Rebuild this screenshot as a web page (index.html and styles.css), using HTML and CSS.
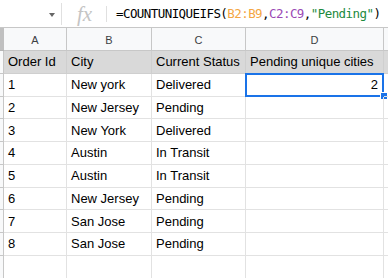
FILE: index.html
```html
<!DOCTYPE html>
<html>
<head>
<meta charset="utf-8">
<link rel="stylesheet" href="styles.css">
</head>
<body>
<div class="formula-bar">
  <div class="namebox"><span class="caret"></span></div>
  <div class="sep sep-tall"></div>
  <div class="fx">fx</div>
  <div class="sep sep-short"></div>
  <div class="formula">=COUNTUNIQUEIFS(<span class="r1">B2:B9</span>,<span class="r2">C2:C9</span>,<span class="str">"Pending"</span>)</div>
</div>
<div class="sheet">
  <div class="corner"></div>
  <div class="colhead">A</div>
  <div class="colhead">B</div>
  <div class="colhead">C</div>
  <div class="colhead">D</div>
  <div class="colhead"></div>

  <div class="rowhead"></div>
  <div class="cell hdr">Order Id</div>
  <div class="cell hdr">City</div>
  <div class="cell hdr">Current Status</div>
  <div class="cell hdr">Pending unique cities</div>
  <div class="cell hdr"></div>

  <div class="rowhead"></div>
  <div class="cell">1</div>
  <div class="cell">New york</div>
  <div class="cell">Delivered</div>
  <div class="cell num selected">2<span class="sel-box"></span><span class="sel-handle"></span></div>
  <div class="cell"></div>

  <div class="rowhead"></div>
  <div class="cell">2</div>
  <div class="cell">New Jersey</div>
  <div class="cell">Pending</div>
  <div class="cell"></div>
  <div class="cell"></div>

  <div class="rowhead"></div>
  <div class="cell">3</div>
  <div class="cell">New York</div>
  <div class="cell">Delivered</div>
  <div class="cell"></div>
  <div class="cell"></div>

  <div class="rowhead"></div>
  <div class="cell">4</div>
  <div class="cell">Austin</div>
  <div class="cell">In Transit</div>
  <div class="cell"></div>
  <div class="cell"></div>

  <div class="rowhead"></div>
  <div class="cell">5</div>
  <div class="cell">Austin</div>
  <div class="cell">In Transit</div>
  <div class="cell"></div>
  <div class="cell"></div>

  <div class="rowhead"></div>
  <div class="cell">6</div>
  <div class="cell">New Jersey</div>
  <div class="cell">Pending</div>
  <div class="cell"></div>
  <div class="cell"></div>

  <div class="rowhead"></div>
  <div class="cell">7</div>
  <div class="cell">San Jose</div>
  <div class="cell">Pending</div>
  <div class="cell"></div>
  <div class="cell"></div>

  <div class="rowhead"></div>
  <div class="cell">8</div>
  <div class="cell">San Jose</div>
  <div class="cell">Pending</div>
  <div class="cell"></div>
  <div class="cell"></div>

  <div class="rowhead"></div>
  <div class="cell"></div>
  <div class="cell"></div>
  <div class="cell"></div>
  <div class="cell"></div>
  <div class="cell"></div>

  <div class="rowhead"></div>
  <div class="cell"></div>
  <div class="cell"></div>
  <div class="cell"></div>
  <div class="cell"></div>
  <div class="cell"></div>
</div>
</body>
</html>
```
FILE: styles.css
```css
* { box-sizing: border-box; }
html, body {
  margin: 0;
  padding: 0;
  background: #fff;
  overflow: hidden;
  width: 388px;
  height: 278px;
}
body {
  font-family: "Liberation Sans", Arial, sans-serif;
}
.formula-bar {
  height: 28px;
  display: flex;
  align-items: center;
  border-bottom: 1px solid #c7c7c7;
  background: #fff;
}
.namebox {
  width: 61px;
  height: 100%;
  display: flex;
  align-items: center;
  justify-content: flex-end;
  padding-right: 6px;
  padding-top: 2px;
}
.caret {
  width: 0;
  height: 0;
  border-left: 3.5px solid transparent;
  border-right: 3.5px solid transparent;
  border-top: 4px solid #666;
}
.sep {
  width: 1px;
  background: #e0e0e0;
}
.sep-tall { height: 22px; }
.sep-short { height: 16px; }
.fx {
  width: 44px;
  text-align: center;
  font-family: "Liberation Serif", serif;
  font-style: italic;
  font-size: 21px;
  color: #c4c4c4;
  line-height: 26px;
  padding-left: 1px;
}
.formula {
  padding-left: 9px;
  font-family: "DejaVu Sans Mono", "Liberation Mono", monospace;
  font-size: 12.5px;
  letter-spacing: -0.57px;
  color: #000;
  white-space: nowrap;
  line-height: 26px;
}
.r1 { color: #f4a642; }
.r2 { color: #9b49b5; }
.str { color: #1d8a3e; }

.sheet {
  display: grid;
  grid-template-columns: 4px 63px 85px 94px 138px 1fr;
  grid-template-rows: 23px repeat(10, 22.75px);
}
.corner {
  background: #c0c0c0;
  border-bottom: 1px solid #b5b5b5;
}
.colhead {
  background: #f8f9fa;
  border-right: 1px solid #c7c7c7;
  border-bottom: 1px solid #c7c7c7;
  font-size: 11px;
  color: #3c4043;
  display: flex;
  align-items: center;
  justify-content: center;
  padding-top: 1px;
}
.rowhead {
  background: #f8f9fa;
  border-right: 1px solid #c7c7c7;
  border-bottom: 1px solid #c7c7c7;
}
.cell {
  position: relative;
  border-right: 1px solid #e2e2e2;
  border-bottom: 1px solid #e2e2e2;
  font-size: 13px;
  color: #000;
  padding: 0 4px;
  display: flex;
  align-items: center;
  white-space: nowrap;
}
.cell.hdr {
  background: #d9d9d9;
  border-right-color: #cfcfcf;
  border-bottom-color: #cfcfcf;
}
.cell.num {
  justify-content: flex-end;
  padding-right: 5px;
}
.sel-box {
  position: absolute;
  left: -1px;
  top: -1px;
  right: -1px;
  bottom: -1px;
  border: 2px solid #1a73e8;
  pointer-events: none;
}
.sel-handle {
  position: absolute;
  right: -5px;
  bottom: -4px;
  width: 6px;
  height: 6px;
  background: #1a73e8;
  border: 1px solid #fff;
  box-sizing: content-box;
}
```
